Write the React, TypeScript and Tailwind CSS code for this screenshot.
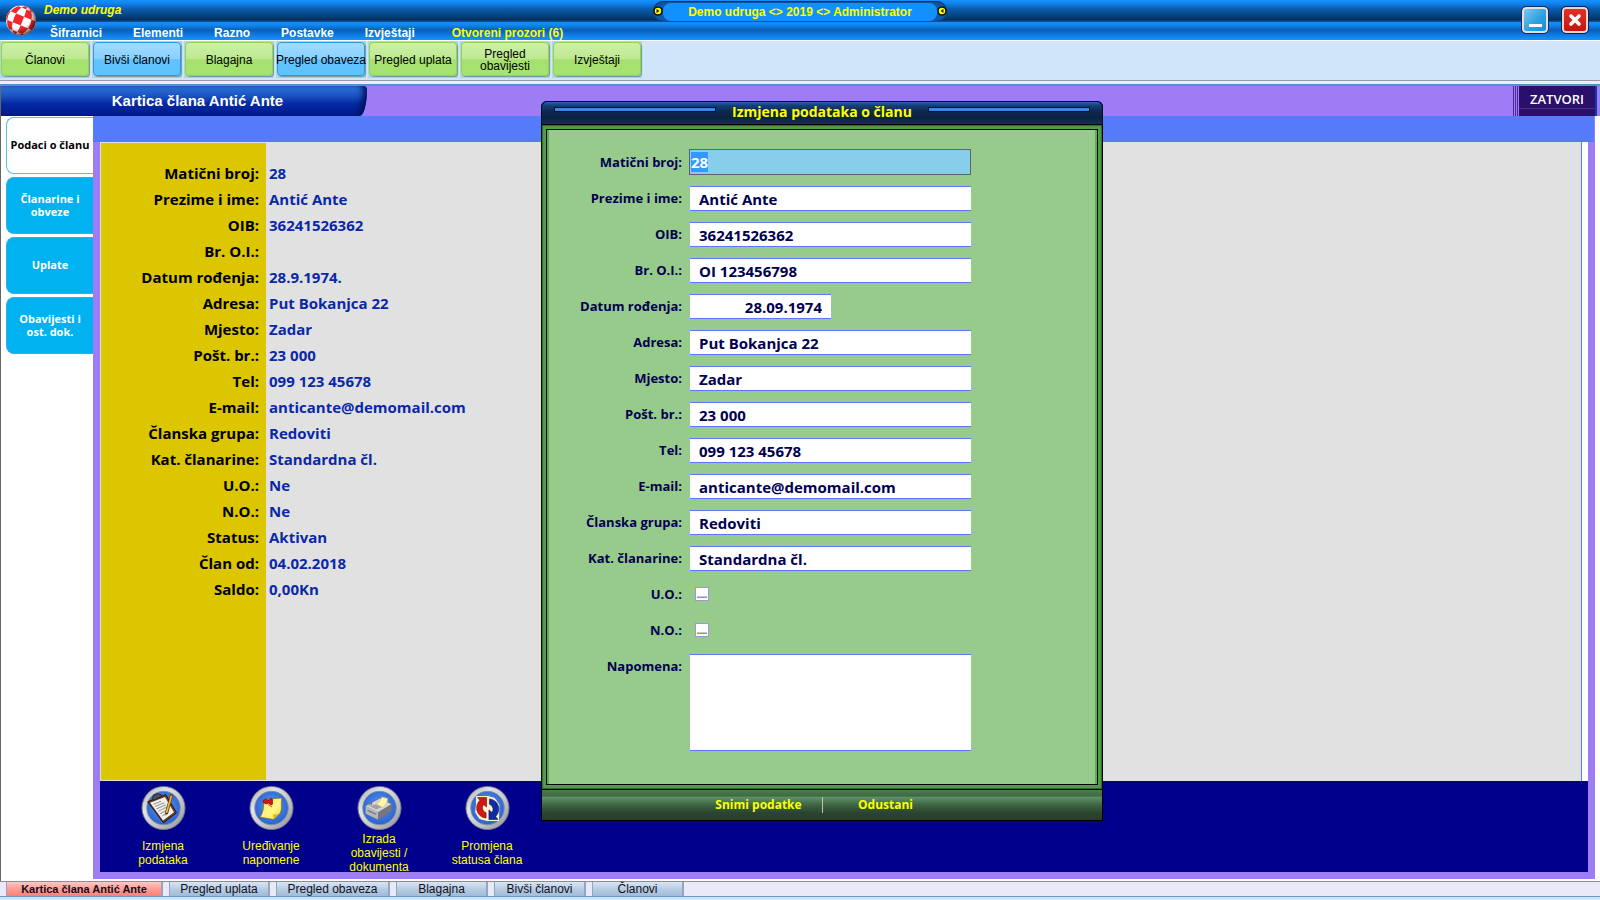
import { useEffect, useRef } from "react";

const MENU = ["Šifrarnici", "Elementi", "Razno", "Postavke", "Izvještaji"];

const TOOLS = [
  { lines: ["Članovi"], blue: false },
  { lines: ["Bivši članovi"], blue: true },
  { lines: ["Blagajna"], blue: false },
  { lines: ["Pregled obaveza"], blue: true },
  { lines: ["Pregled uplata"], blue: false },
  { lines: ["Pregled", "obavijesti"], blue: false },
  { lines: ["Izvještaji"], blue: false },
];

const SIDE = ["Podaci o članu", "Članarine i obveze", "Uplate", "Obavijesti i ost. dok."];

const DETAILS: [string, string][] = [
  ["Matični broj:", "28"],
  ["Prezime i ime:", "Antić Ante"],
  ["OIB:", "36241526362"],
  ["Br. O.I.:", ""],
  ["Datum rođenja:", "28.9.1974."],
  ["Adresa:", "Put Bokanjca 22"],
  ["Mjesto:", "Zadar"],
  ["Pošt. br.:", "23 000"],
  ["Tel:", "099 123 45678"],
  ["E-mail:", "anticante@demomail.com"],
  ["Članska grupa:", "Redoviti"],
  ["Kat. članarine:", "Standardna čl."],
  ["U.O.:", "Ne"],
  ["N.O.:", "Ne"],
  ["Status:", "Aktivan"],
  ["Član od:", "04.02.2018"],
  ["Saldo:", "0,00Kn"],
];

const FIELDS: { id: string; label: string; value: string; short?: boolean }[] = [
  { id: "prezime", label: "Prezime i ime:", value: "Antić Ante" },
  { id: "oib", label: "OIB:", value: "36241526362" },
  { id: "broi", label: "Br. O.I.:", value: "OI 123456798" },
  { id: "datum", label: "Datum rođenja:", value: "28.09.1974", short: true },
  { id: "adresa", label: "Adresa:", value: "Put Bokanjca 22" },
  { id: "mjesto", label: "Mjesto:", value: "Zadar" },
  { id: "posta", label: "Pošt. br.:", value: "23 000" },
  { id: "tel", label: "Tel:", value: "099 123 45678" },
  { id: "email", label: "E-mail:", value: "anticante@demomail.com" },
  { id: "grupa", label: "Članska grupa:", value: "Redoviti" },
  { id: "kategorija", label: "Kat. članarine:", value: "Standardna čl." },
];

const WINDOWS = [
  { label: "Kartica člana Antić Ante", width: "w-[157px]" },
  { label: "Pregled uplata", width: "w-[101px]" },
  { label: "Pregled obaveza", width: "w-[114px]" },
  { label: "Blagajna", width: "w-[92px]" },
  { label: "Bivši članovi", width: "w-[92px]" },
  { label: "Članovi", width: "w-[92px]" },
];

/* Red patches of a chequered sphere, projected flat and tilted. */
function spherePatches(): string[] {
  const rad = Math.PI / 180;
  const tilt = 22 * rad;
  const step = 36;
  const point = (lat: number, lon: number) => {
    const x = Math.cos(lat * rad) * Math.sin(lon * rad) * 15;
    const y = Math.sin(lat * rad) * 15;
    const px = 15 + x * Math.cos(tilt) - y * Math.sin(tilt);
    const py = 15.5 + x * Math.sin(tilt) + y * Math.cos(tilt);
    return `${px.toFixed(2)} ${py.toFixed(2)}`;
  };
  const out: string[] = [];
  for (let i = 0; i < 5; i++) {
    for (let j = 0; j < 6; j++) {
      if ((i + j) % 2) continue;
      const lat = -90 + i * step;
      const lon0 = Math.max(-90, -102 + j * step);
      const lon1 = Math.min(90, -102 + (j + 1) * step);
      if (lon1 <= lon0) continue;
      const mid = (lon0 + lon1) / 2;
      const pts = [
        point(lat, lon0), point(lat, mid), point(lat, lon1),
        point(lat + step / 2, lon1), point(lat + step, lon1),
        point(lat + step, mid), point(lat + step, lon0), point(lat + step / 2, lon0),
      ];
      out.push(`M${pts.join("L")}Z`);
    }
  }
  return out;
}

function BallLogo() {
  return (
    <svg viewBox="0 0 30 31" className="h-[31px] w-[30px]" aria-hidden="true">
      <defs>
        <radialGradient id="ballShade" cx="42%" cy="40%" r="62%">
          <stop offset="60%" stopColor="#300" stopOpacity="0" />
          <stop offset="100%" stopColor="#200" stopOpacity=".7" />
        </radialGradient>
      </defs>
      <circle cx="15" cy="15.5" r="15" fill="#fff" />
      {spherePatches().map((d) => (
        <path key={d} d={d} fill="#f0272b" />
      ))}
      <circle cx="15" cy="15.5" r="15" fill="url(#ballShade)" />
    </svg>
  );
}

function Knob({ flip }: { flip?: boolean }) {
  return (
    <svg viewBox="0 0 10 10" className="size-[10px]" aria-hidden="true">
      <circle cx="5" cy="5" r="4" fill="#ff0" stroke="#111" strokeWidth="1.6" />
      <path d={flip ? "M6.5 3v4L3.5 5z" : "M3.5 3v4L6.5 5z"} fill="#222" />
    </svg>
  );
}

function RoundBase() {
  return (
    <>
      <circle cx="23.500" cy="23" r="22.500" fill="url(#ring)" stroke="#777d88" strokeWidth="1" />
      <circle cx="23.500" cy="23" r="17.500" fill="url(#disc)" stroke="#7f8da8" strokeWidth="1" />
    </>
  );
}

function SharedGradients() {
  return (
    <svg className="absolute size-0" aria-hidden="true">
      <defs>
        <linearGradient id="ring" x1="0" y1="0" x2="1" y2="1">
          <stop offset="0" stopColor="#a0a2a6" />
          <stop offset=".3" stopColor="#e2e3e6" />
          <stop offset=".65" stopColor="#bfc1c6" />
          <stop offset="1" stopColor="#8b8e94" />
        </linearGradient>
        <radialGradient id="disc" cx="50%" cy="45%" r="55%">
          <stop offset="0" stopColor="#5c9bf2" />
          <stop offset="1" stopColor="#2a62d0" />
        </radialGradient>
        <linearGradient id="note" x1="0" y1="0" x2="1" y2="1">
          <stop offset="0" stopColor="#fff04a" />
          <stop offset=".6" stopColor="#fff68a" />
          <stop offset="1" stopColor="#f2d21c" />
        </linearGradient>
      </defs>
    </svg>
  );
}

function ClipboardIcon() {
  return (
    <svg viewBox="0 0 47 46" className="h-[46px] w-[47px]" aria-hidden="true">
      <RoundBase />
      <path d="M7 16.500l19-7.500 11 19-13.500 10.500z" fill="#6b3a1c" stroke="#23130a" />
      <path d="M9.500 17.500l15.500-6 9.500 16-11.500 8.500z" fill="#f1f1ee" />
      <path d="M13 19l8-3M14.500 21.500l10-4M16 24l10-4.500M18 26.500l9-4.500M20 29l8-4.500M22 31.500l6-4" stroke="#9a9a9a" strokeWidth="1.100" />
      <path d="M12 13l1-3.500 4-1.500 4 1 .5 2-8.500 4z" fill="#4a4f55" stroke="#1c1f22" strokeWidth=".8" />
      <path d="M32 9l-5.500 20" stroke="#4b2a00" strokeWidth="3.200" />
      <path d="M32 9.500l-5.500 19" stroke="#f3b63c" strokeWidth="1.900" />
      <path d="M31 9l2 .7" stroke="#a8402c" strokeWidth="2" />
      <path d="M25.500 31l.5-3 1.700.5z" fill="#222" />
    </svg>
  );
}

function NoteIcon() {
  return (
    <svg viewBox="0 0 47 46" className="h-[46px] w-[47px]" aria-hidden="true">
      <RoundBase />
      <path d="M15.500 14l19-1.500c-2 6 1 10-2 16l-7 6.500-14-2.500c4-6 4-12 4-18.500z" fill="url(#note)" stroke="#7a6a10" strokeWidth=".7" />
      <path d="M25.500 35c1-3 0-4.500-1-5.500 3 1 6 0 8-1z" fill="#d9b81a" />
      <path d="M15 15l3-1.500 2 1.500 3-2 1.500 1v5l-1.500.8-3-2-2 1-3-1.500z" fill="#d8141c" stroke="#6d0408" strokeWidth=".7" />
      <path d="M20 19l4 3" stroke="#c98a28" strokeWidth="1.400" />
    </svg>
  );
}

function PrinterIcon() {
  return (
    <svg viewBox="0 0 47 46" className="h-[46px] w-[47px]" aria-hidden="true">
      <RoundBase />
      <path d="M9 21l15-8 12 6v7l-14 9-13-6z" fill="#8d9096" stroke="#5f636b" strokeWidth=".7" />
      <path d="M9 21l15-8 12 6-14 8.500z" fill="#d2d4d8" />
      <path d="M22 27.500l14-8.500v7l-14 9z" fill="#74777d" />
      <path d="M9 21l13 6.500v7.500l-13-6z" fill="#b3b6bb" />
      <path d="M20 19.500c3-2 4-5 6-8l6 1.500c0 4-2 7-5 9.500z" fill="#fff6a8" stroke="#c9bd6a" strokeWidth=".6" />
      <path d="M13 21l7 3.500 6-2.500-6-3z" fill="#9fa2a8" />
      <circle cx="13" cy="19.500" r="1" fill="#3bb54a" />
      <circle cx="15" cy="18.500" r="1" fill="#e33" />
      <path d="M11 25.500l9 4" stroke="#777" strokeWidth="1.200" />
    </svg>
  );
}

function SwapIcon() {
  return (
    <svg viewBox="0 0 47 46" className="h-[46px] w-[47px]" aria-hidden="true">
      <RoundBase />
      <path d="M11.500 10.500H24l7 2 5 7-.5 17H23l-8-2-4.500-7 1-8z" fill="#fff3cf" />
      <path d="M13 12h9.500v10L19.500 19.500c-2.500 2.500-1.500 6.500 2.500 8.500v5.500c-9.500-1-13-11.500-6.500-18.500z" fill="#d01616" stroke="#5a0808" strokeWidth=".6" />
      <path d="M34.500 35H25V25l3 2.500c2.500-2.500 1.500-6.500-2.500-8.500V13.500c9.500 1 13 11.500 6.500 18.500z" fill="#102aa8" stroke="#061050" strokeWidth=".6" />
    </svg>
  );
}

const ACTIONS = [
  { label: "Izmjena podataka", Icon: ClipboardIcon },
  { label: "Uređivanje napomene", Icon: NoteIcon },
  { label: "Izrada obavijesti / dokumenta", Icon: PrinterIcon },
  { label: "Promjena statusa člana", Icon: SwapIcon },
];

const toolBase =
  "flex h-[34px] w-[88px] flex-col items-center justify-center rounded-[4px] border pt-[2px] text-[12px] leading-[12px] whitespace-nowrap text-black shadow-[1px_1px_1px_#6f9a9a]";
const toolGreen = "border-[#8fd64a] bg-[linear-gradient(#cdf0a8,#bde98f_50%,#a6e070_52%,#a5e470)]";
const toolBlue = "border-[#2d9ae0] bg-[linear-gradient(#a2dcff,#86d0ff_50%,#62c2ff_52%,#5cc4ff)]";

const labelClass = "w-[135px] shrink-0 text-right text-[13px] leading-[20px] font-bold text-[#000050]";
const inputClass =
  "h-[25px] border-y border-[#567bfa] bg-white px-[9px] pt-[2px] text-[15px] leading-[20px] font-bold text-[#000050] outline-none";
const checkClass =
  "h-[14px] w-[14px] appearance-none border border-[#9a9ad0] bg-white bg-[linear-gradient(#c8c8c8_50%,#8c8cc8_50%)] bg-[length:10px_2px] bg-[position:1px_8px] bg-no-repeat";

function MemberDialog() {
  const first = useRef<HTMLInputElement>(null);
  useEffect(() => {
    first.current?.focus();
    first.current?.select();
  }, []);

  return (
    <form
      role="dialog"
      aria-labelledby="dialog-title"
      className="absolute top-[101px] left-[541px] flex w-[562px] flex-col rounded-t-[6px] bg-black font-['Open_Sans','Noto_Sans',sans-serif]"
    >
      <header className="flex h-[23px] items-start gap-4 rounded-t-[6px] border border-b-0 border-[#04101f] bg-[linear-gradient(#2668b4,#16407a_15%,#0e2a50_40%,#0a2240_70%,#123058)] px-3">
        <span className="mt-[5px] h-[5px] flex-1 border border-[#06122a] bg-[#3f86e0]" />
        <h2 id="dialog-title" className="text-[14px] leading-[20px] font-bold text-[#ffff00]">
          Izmjena podataka o članu
        </h2>
        <span className="mt-[5px] h-[5px] flex-1 border border-[#06122a] bg-[#3f86e0]" />
      </header>

      <div className="mt-px border-x border-black bg-[#4f9f48] p-[4px] shadow-[inset_1px_1px_1px_#2c6b28,inset_-1px_-1px_1px_#2c6b28]">
        <div className="flex flex-col border border-black bg-[#96cb8c] pt-[14px] pb-[33px] shadow-[inset_2px_0_0_#5fae55,inset_-2px_0_0_#5fae55]">
          <div className="flex h-[36px] items-center gap-[7px]">
            <label htmlFor="maticni" className={labelClass}>Matični broj:</label>
            <input
              id="maticni"
              ref={first}
              defaultValue="28"
              className="h-[26px] w-[282px] border border-[#606070] bg-[#87ceeb] px-px text-[15px] leading-[20px] font-bold text-[#000050] outline-none selection:bg-[#3399ff] selection:text-white"
            />
          </div>
          {FIELDS.map((f) => (
            <div key={f.id} className="flex h-[36px] items-center gap-[8px]">
              <label htmlFor={f.id} className={labelClass}>{f.label}</label>
              <input
                id={f.id}
                defaultValue={f.value}
                className={`${inputClass} ${f.short ? "w-[141px] text-right" : "w-[281px]"}`}
              />
            </div>
          ))}
          <div className="flex h-[36px] items-center gap-[13px]">
            <label htmlFor="uo" className={labelClass}>U.O.:</label>
            <input id="uo" type="checkbox" className={checkClass} />
          </div>
          <div className="flex h-[36px] items-center gap-[13px]">
            <label htmlFor="no" className={labelClass}>N.O.:</label>
            <input id="no" type="checkbox" className={checkClass} />
          </div>
          <div className="flex items-start gap-[8px] pt-[6px]">
            <label htmlFor="napomena" className={`${labelClass} pt-[2px]`}>Napomena:</label>
            <textarea
              id="napomena"
              className="h-[97px] w-[281px] resize-none border-y border-[#567bfa] bg-white p-2 text-[15px] font-bold text-[#000050] outline-none"
            />
          </div>
        </div>
      </div>

      <footer className="mt-px flex h-[31px] items-center justify-center border border-t-0 border-black bg-[linear-gradient(#4c7c50,#3f6a43_20%,#5d9168_25%,#3d6442_50%,#2c452f_75%,#283c2a)] text-[12px] leading-[18px] font-bold text-[#ffff00]">
        <button type="button" className="w-[126px] text-center">Snimi podatke</button>
        <span className="h-[16px] w-px bg-[#b8c8b8]" />
        <button type="button" className="w-[126px] text-center">Odustani</button>
      </footer>
    </form>
  );
}

export default function App() {
  return (
    <div className="relative flex min-h-screen flex-col bg-white font-['Liberation_Sans',Arial,sans-serif]">
      <SharedGradients />

      <header className="flex h-[40px] bg-[linear-gradient(#1490ff,#1187f0_3px,#0a5cad_9px,#06427c_16px,#05305c_20px,#0a5cad_22px,#1490ff_22px,#1187f0_25px,#0a5fb5_30px,#0c6fd0_33px,#1490ff_39px)]">
        <div className="flex flex-1 basis-0">
          <div className="flex w-[44px] shrink-0 items-center justify-center pr-[2px]">
            <BallLogo />
          </div>
          <div className="flex-1 whitespace-nowrap">
            <p className="h-[20px] text-[12px] leading-[20px] font-bold text-[#ffff00] italic">Demo udruga</p>
            <nav className="flex h-[20px] gap-[31px] pt-[5px] pl-[6px] text-[12px] leading-[16px] font-bold text-white">
              {MENU.map((m) => (
                <a key={m} href="#">{m}</a>
              ))}
              <a href="#" className="pl-[6px] text-[#ffff00]">Otvoreni prozori (6)</a>
            </nav>
          </div>
        </div>
        <div className="mt-[1px] flex h-[20px] w-[294px] shrink-0 items-center justify-between rounded-full bg-[#0b58a8] shadow-[inset_0_1px_1px_#06305c]">
          <Knob />
          <p className="mt-[2px] flex h-[18px] flex-1 items-center justify-center rounded-[8px] bg-[#1290ff] text-[12px] leading-[18px] font-bold text-[#ffff00]">
            Demo udruga &lt;&gt; 2019 &lt;&gt; Administrator
          </p>
          <Knob flip />
        </div>
        <div className="flex flex-1 basis-0 items-center justify-end gap-[14px]">
          <button
            type="button"
            aria-label="Minimiziraj"
            className="flex size-[26px] items-end justify-center rounded-[4px] border-2 border-[#e8e0c8] bg-[linear-gradient(135deg,#7cc8f0,#2a9ee0_60%,#1590dc)] pb-[4px] outline outline-1 outline-[#0a2a80]"
          >
            <span className="h-[3px] w-[13px] bg-white" />
          </button>
          <button
            type="button"
            aria-label="Zatvori prozor"
            className="mr-[12px] flex size-[26px] items-center justify-center rounded-[4px] border-2 border-[#e8d8c8] bg-[linear-gradient(#e03028,#c81410)] outline outline-1 outline-[#0a1a70]"
          >
            <svg viewBox="0 0 14 14" className="size-[14px]" aria-hidden="true">
              <path d="M3 3l8 8M11 3l-8 8" stroke="#fff" strokeWidth="3.600" strokeLinecap="round" />
            </svg>
          </button>
        </div>
      </header>

      <nav className="mt-px flex h-[40px] items-start border-b border-[#9a98a8] bg-[#d0e5fa]">
        {TOOLS.map((t) => (
          <div key={t.lines[0] + t.lines.length} className="mr-[2px] flex h-[37px] w-[90px] bg-[#b4d4de] pt-px pl-px">
            <button type="button" className={`${toolBase} ${t.blue ? toolBlue : toolGreen}`}>
              {t.lines.map((l) => (
                <span key={l}>{l}</span>
              ))}
            </button>
          </div>
        ))}
      </nav>
      <div className="h-[5px] border-b-2 border-[#4f94c8] bg-[#e8f0fa]" />

      <section className="flex h-[30px] border-l border-[#666] bg-[#9e7cf6]">
        <h1 className="flex w-[366px] items-center justify-center rounded-tr-[4px] rounded-br-[8px_28px] bg-[linear-gradient(#2f78dc,#1a4fc0_35%,#0428a4_60%,#001c8c)] pl-[27px] text-[15px] leading-[20px] font-bold text-white shadow-[inset_-6px_0_6px_-2px_#02105c]">
          Kartica člana Antić Ante
        </h1>
        <div className="flex flex-1 justify-end">
          <span className="w-[6px] bg-[repeating-linear-gradient(90deg,#4a2a98_0_1px,#9e7cf6_1px_2px)]" />
          <button
            type="button"
            className="w-[76px] bg-[linear-gradient(#2a1068_22px,#4a3090_22px,#4a3090_23px,#2a1068_23px)] pb-[4px] font-['Open_Sans','Noto_Sans',sans-serif] text-[13px] leading-[18px] font-semibold text-white"
          >
            ZATVORI
          </button>
          <span className="mr-[3px] w-[2px] bg-[#0a3cb0]" />
        </div>
      </section>

      <main className="flex flex-1 border-l border-[#666] font-['Open_Sans','Noto_Sans',sans-serif]">
        <nav className="flex w-[92px] shrink-0 flex-col gap-[3px] pl-[5px]">
          {SIDE.map((s, i) => (
            <button
              key={s}
              type="button"
              className={
                i === 0
                  ? "mt-px h-[57px] rounded-l-[8px] border border-r-0 border-[#5cc0e0] bg-white pb-[2px] text-[11px] leading-[13px] font-bold whitespace-nowrap text-black"
                  : "h-[57px] rounded-l-[8px] border border-r-0 border-[#38b0dc] bg-[#00b2f0] px-2 pb-[2px] text-[11px] leading-[13px] font-bold text-white"
              }
            >
              {s}
            </button>
          ))}
        </nav>

        <div className="mr-[5px] mb-[2px] flex flex-1 flex-col bg-[#9e7cf6] pr-[7px] pb-[7px]">
          <div className="mr-[-6px] h-[26px] bg-[#567bfa]" />
          <div className="ml-[7px] flex flex-1 flex-col">
            <div className="flex flex-1 border-r-[6px] border-white bg-[#e1e1e1]">
              <div className="flex flex-1 border-r border-[#567bfa] p-px">
                <dl className="grid flex-1 auto-rows-[26px] grid-cols-[165px_1fr] bg-[linear-gradient(90deg,#dcc600_165px,#e1e1e1_165px)] pt-[18px] text-[15px] leading-[25px] font-bold">
                  {DETAILS.map(([k, v]) => (
                    <div key={k} className="contents">
                      <dt className="pr-[7px] text-right text-black">{k}</dt>
                      <dd className="pl-[3px] text-[#0a28a8]">{v}</dd>
                    </div>
                  ))}
                </dl>
              </div>
            </div>
            <div className="flex h-[91px] bg-[#00008c] pl-[9px] font-['Liberation_Sans',Arial,sans-serif]">
              {ACTIONS.map(({ label, Icon }) => (
                <button
                  key={label}
                  type="button"
                  className="flex h-[91px] w-[108px] flex-col items-center justify-start pt-[5px] text-[12px] leading-[14px] text-[#ffff00]"
                >
                  <Icon />
                  <span className="flex h-[42px] w-[76px] shrink-0 items-center justify-center pt-[4px]">{label}</span>
                </button>
              ))}
            </div>
          </div>
        </div>
      </main>

      <footer className="flex h-[16px] gap-[6px] border-t border-b border-t-[#8c8c98] border-b-[#60a0c8] bg-[#e8eafa] pl-[6px] leading-[14px]">
        {WINDOWS.map((w, i) => (
          <button
            key={w.label}
            type="button"
            className={`${w.width} border-r-2 border-l border-[#98a4bc] whitespace-nowrap text-[#101020] ${
              i === 0
                ? "bg-[linear-gradient(#ffc8c4,#ff9c94_50%,#ff8078)] text-[11px] font-bold"
                : "bg-[linear-gradient(#d8e6f4,#b8cce4_50%,#a0bcd8)] text-[12px]"
            }`}
          >
            {w.label}
          </button>
        ))}
      </footer>
      <div className="h-[3px] bg-[#d0e5fa]" />

      <MemberDialog />
    </div>
  );
}
